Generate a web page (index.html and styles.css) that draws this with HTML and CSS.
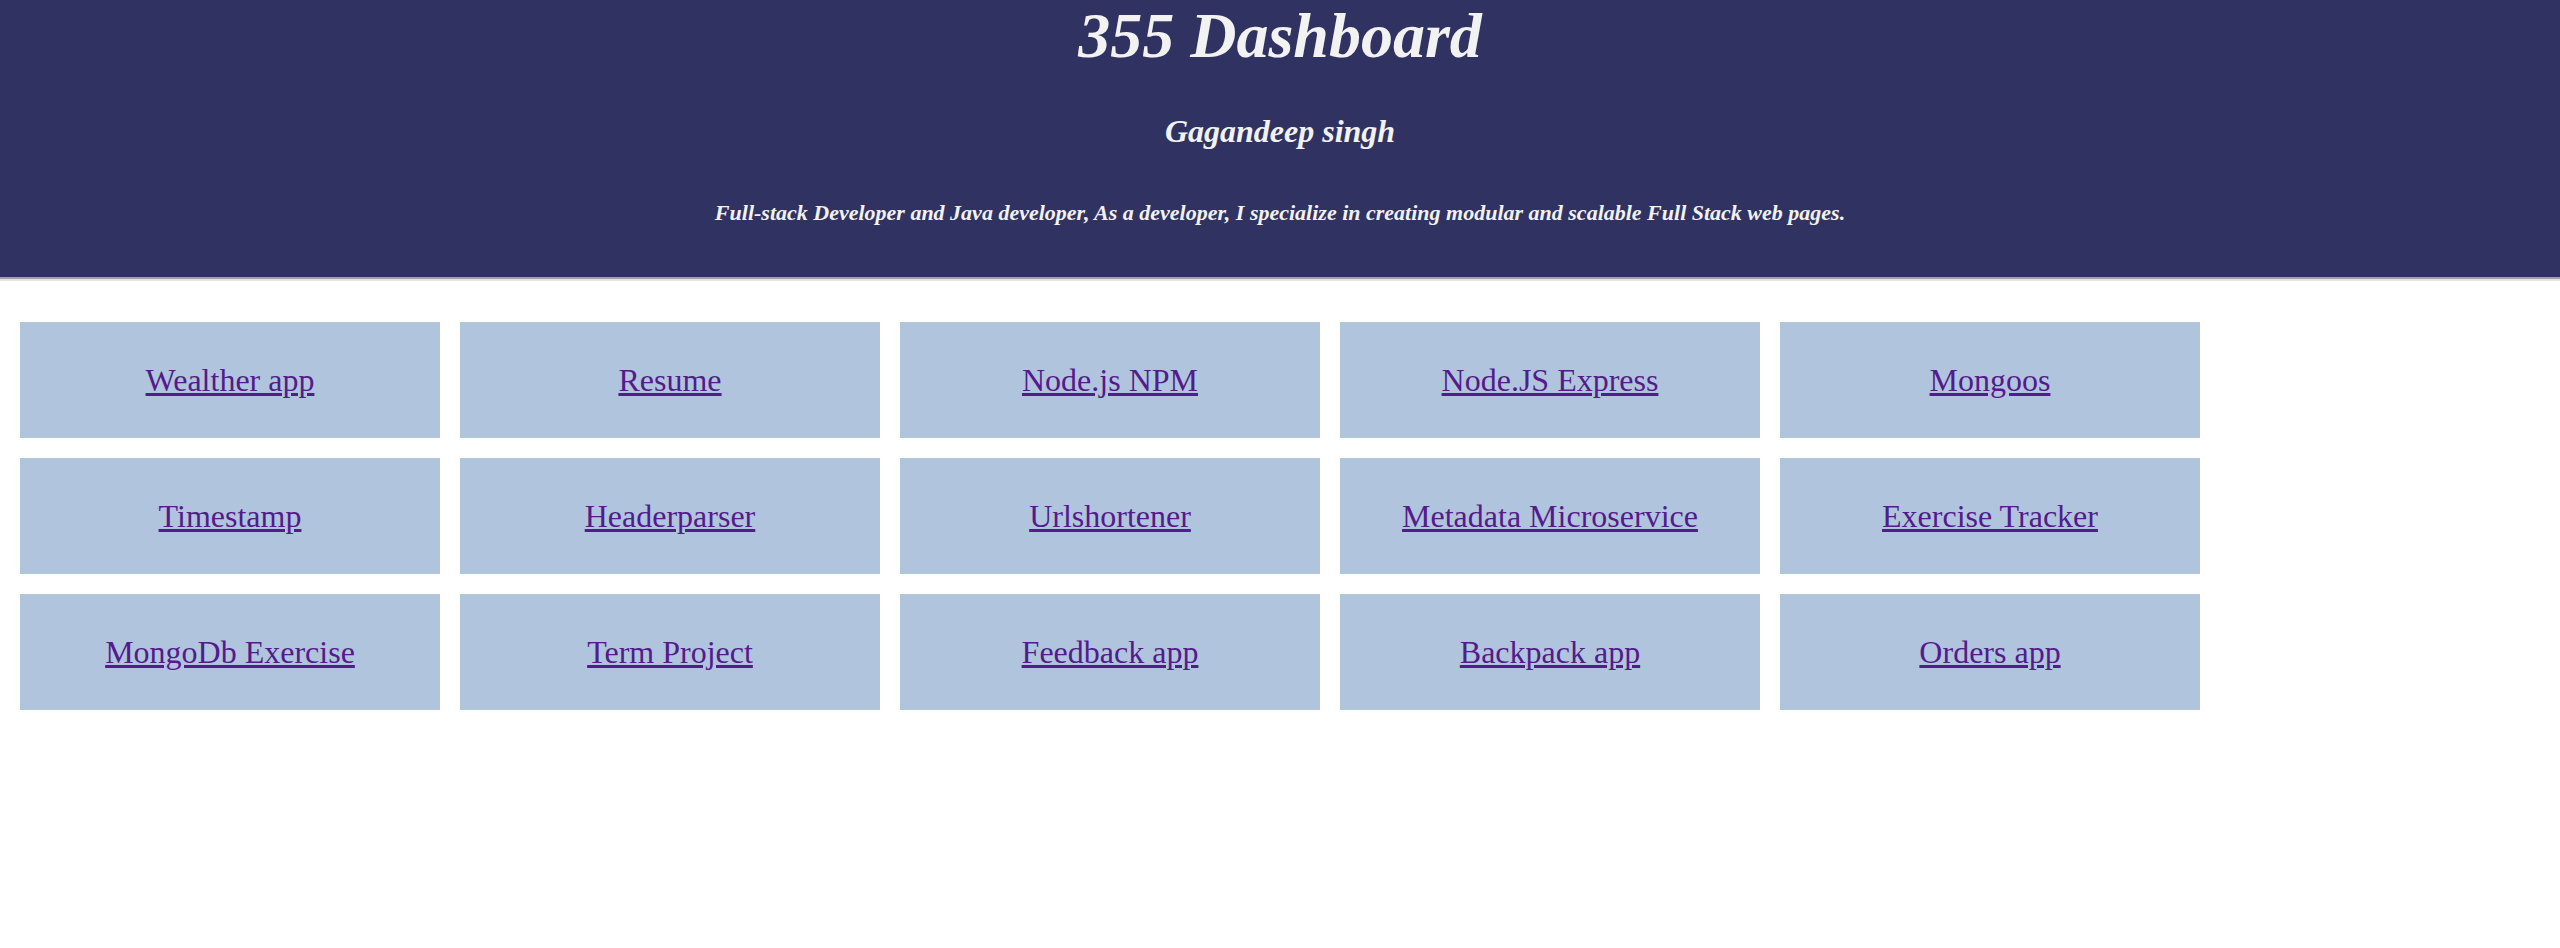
FILE: index.html
```html
<!DOCTYPE html>
<html lang="en">
<head>
<meta charset="utf-8">
<title>355 Dashboard</title>
<link rel="stylesheet" href="styles.css">
</head>
<body>
<header class="hero">
  <h1 class="hero-title">355 Dashboard</h1>
  <h2 class="hero-name">Gagandeep singh</h2>
  <p class="hero-desc">Full-stack Developer and Java developer, As a developer, I specialize in creating modular and scalable Full Stack web pages.</p>
</header>
<main class="board">
  <div class="grid">
    <div class="tile"><a href="#w">Wealther app</a></div>
    <div class="tile"><a href="#r">Resume</a></div>
    <div class="tile"><a href="#n">Node.js NPM</a></div>
    <div class="tile"><a href="#e">Node.JS Express</a></div>
    <div class="tile"><a href="#m">Mongoos</a></div>
    <div class="tile"><a href="#t">Timestamp</a></div>
    <div class="tile"><a href="#h">Headerparser</a></div>
    <div class="tile"><a href="#u">Urlshortener</a></div>
    <div class="tile"><a href="#md">Metadata Microservice</a></div>
    <div class="tile"><a href="#et">Exercise Tracker</a></div>
    <div class="tile"><a href="#me">MongoDb Exercise</a></div>
    <div class="tile"><a href="#tp">Term Project</a></div>
    <div class="tile"><a href="#f">Feedback app</a></div>
    <div class="tile"><a href="#b">Backpack app</a></div>
    <div class="tile"><a href="#o">Orders app</a></div>
  </div>
</main>
</body>
</html>
```

FILE: styles.css
```css
html, body {
  margin: 0;
  padding: 0;
  background: #ffffff;
  font-family: "Liberation Serif", "Times New Roman", serif;
}

.hero {
  background: #303261;
  color: #f2f2f2;
  text-align: center;
  padding: 0 0 52px;
  border-bottom: 2px solid #a2a2a2;
  box-shadow: 0 2px 0 #e4e4e4;
}

.hero-title {
  margin: 0;
  font-size: 64px;
  line-height: 71px;
  font-style: italic;
  font-weight: bold;
}

.hero-name {
  margin: 43px 0 0;
  font-size: 32px;
  line-height: 35px;
  font-style: italic;
  font-weight: bold;
}

.hero-desc {
  margin: 52px 0 0;
  font-size: 22px;
  line-height: 24px;
  font-style: italic;
  font-weight: bold;
}

.board {
  padding: 43px 20px 20px;
}

.grid {
  display: grid;
  grid-template-columns: repeat(5, 420px);
  grid-auto-rows: 116px;
  gap: 20px;
}

.tile {
  background: #b0c4de;
  display: flex;
  align-items: center;
  justify-content: center;
  font-size: 32px;
}

.tile a {
  color: #551a8b;
  text-decoration: underline;
}
```
